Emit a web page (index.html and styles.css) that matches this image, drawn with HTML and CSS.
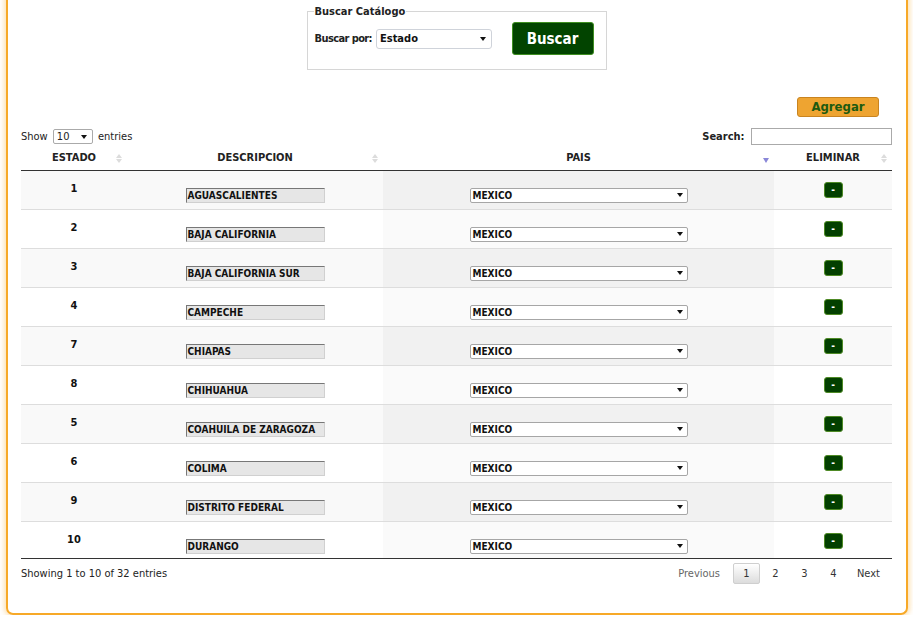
FILE: index.html
```html
<!DOCTYPE html>
<html lang="es">
<head>
<meta charset="utf-8">
<title>Catálogo de Estados</title>
<link rel="stylesheet" href="styles.css">
</head>
<body>
<div class="frame">
  <fieldset class="search-box">
    <legend>Buscar Catálogo</legend>
    <div class="search-row">
      <label class="lbl">Buscar por:</label>
      <span class="sel sel-big">Estado<i class="caret"></i></span>
      <button class="btn-buscar">Buscar</button>
    </div>
  </fieldset>

  <div class="actions"><button class="btn-agregar">Agregar</button></div>

  <div class="dt">
    <div class="dt-top">
      <div class="length">Show <span class="sel sel-len">10<i class="caret"></i></span> entries</div>
      <div class="filter">Search: <span class="search-input"></span></div>
    </div>
    <table class="grid">
      <colgroup><col class="c1"><col class="c2"><col class="c3"><col class="c4"></colgroup>
      <thead>
        <tr>
          <th>ESTADO<span class="sort"></span></th>
          <th>DESCRIPCION<span class="sort"></span></th>
          <th class="sorted">PAIS<span class="sort-desc"></span></th>
          <th>ELIMINAR<span class="sort"></span></th>
        </tr>
      </thead>
      <tbody>
        <tr><td><div class="num">1</div></td><td><span class="desc">AGUASCALIENTES</span></td><td class="s"><span class="sel sel-pais">MEXICO<i class="caret"></i></span></td><td><button class="btn-del">-</button></td></tr>
        <tr><td><div class="num">2</div></td><td><span class="desc">BAJA CALIFORNIA</span></td><td class="s"><span class="sel sel-pais">MEXICO<i class="caret"></i></span></td><td><button class="btn-del">-</button></td></tr>
        <tr><td><div class="num">3</div></td><td><span class="desc">BAJA CALIFORNIA SUR</span></td><td class="s"><span class="sel sel-pais">MEXICO<i class="caret"></i></span></td><td><button class="btn-del">-</button></td></tr>
        <tr><td><div class="num">4</div></td><td><span class="desc">CAMPECHE</span></td><td class="s"><span class="sel sel-pais">MEXICO<i class="caret"></i></span></td><td><button class="btn-del">-</button></td></tr>
        <tr><td><div class="num">7</div></td><td><span class="desc">CHIAPAS</span></td><td class="s"><span class="sel sel-pais">MEXICO<i class="caret"></i></span></td><td><button class="btn-del">-</button></td></tr>
        <tr><td><div class="num">8</div></td><td><span class="desc">CHIHUAHUA</span></td><td class="s"><span class="sel sel-pais">MEXICO<i class="caret"></i></span></td><td><button class="btn-del">-</button></td></tr>
        <tr><td><div class="num">5</div></td><td><span class="desc">COAHUILA DE ZARAGOZA</span></td><td class="s"><span class="sel sel-pais">MEXICO<i class="caret"></i></span></td><td><button class="btn-del">-</button></td></tr>
        <tr><td><div class="num">6</div></td><td><span class="desc">COLIMA</span></td><td class="s"><span class="sel sel-pais">MEXICO<i class="caret"></i></span></td><td><button class="btn-del">-</button></td></tr>
        <tr><td><div class="num">9</div></td><td><span class="desc">DISTRITO FEDERAL</span></td><td class="s"><span class="sel sel-pais">MEXICO<i class="caret"></i></span></td><td><button class="btn-del">-</button></td></tr>
        <tr><td><div class="num">10</div></td><td><span class="desc">DURANGO</span></td><td class="s"><span class="sel sel-pais">MEXICO<i class="caret"></i></span></td><td><button class="btn-del">-</button></td></tr>
      </tbody>
    </table>
    <div class="dt-bottom">
      <div class="info">Showing 1 to 10 of 32 entries</div>
      <div class="pager">
        <span class="pg disabled">Previous</span>
        <span class="pg current">1</span>
        <span class="pg">2</span>
        <span class="pg">3</span>
        <span class="pg">4</span>
        <span class="pg">Next</span>
      </div>
    </div>
  </div>
</div>
</body>
</html>
```

FILE: styles.css
```css
* { box-sizing: border-box; }
html, body { margin: 0; padding: 0; background: #fff; overflow: hidden; }
body {
  font-family: "DejaVu Sans Condensed", "DejaVu Sans", sans-serif;
  font-size: 11px;
  color: #222;
}
.frame {
  margin: -10px 5px 0 6px;
  height: 625px;
  border: 2px solid #f7a928;
  border-top: none;
  border-radius: 0 0 7px 7px;
  box-shadow: 0 0 5px 2px rgba(247, 169, 40, 0.35);
  padding: 15px 14px 0 13px;
}
.search-box {
  width: 300px;
  min-width: 0;
  margin: 0 auto;
  border: 1px solid #d6d6d6;
  padding: 4px 12px 14px 7px;
}
.search-box legend {
  padding: 0 1px;
  margin-left: -1px;
  font-weight: bold;
  font-size: 11px;
  color: #222;
}
.search-row { display: flex; align-items: center; min-width: 0; }
.lbl {
  flex: 0 0 auto;
  white-space: nowrap;
  font-weight: bold; color: #222;
  margin-right: 4px;
  letter-spacing: -0.6px;
}
.sel {
  position: relative;
  display: inline-block;
  background: #fff;
  border: 1px solid #b4b4b4;
  border-radius: 2px;
  font-weight: bold;
  color: #111;
}
.caret {
  position: absolute;
  top: 50%;
  margin-top: -2px;
  width: 0; height: 0;
  border-left: 3px solid transparent;
  border-right: 3px solid transparent;
  border-top: 4px solid #111;
}
.sel-big {
  flex: 0 0 116px;
  width: 116px; height: 20px; line-height: 18px;
  padding-left: 3px;
  border-color: #cfd3da;
  border-radius: 3px;
}
.sel-big .caret { right: 5px; }
.btn-buscar {
  flex: 0 0 82px;
  margin-left: auto;
  width: 82px; height: 33px;
  background: #024400;
  border: 1px solid #3f8f21;
  border-radius: 3px;
  color: #fff;
  font-family: inherit;
  font-weight: bold;
  font-size: 15px;
  padding: 0;
}
.actions { display: flex; justify-content: flex-end; margin-top: 27px; padding-right: 13px; }
.btn-agregar {
  width: 82px; height: 20px;
  background: #eea431;
  border: 1px solid #c98420;
  border-radius: 3px;
  color: #1d5a10;
  font-family: inherit;
  font-weight: bold;
  font-size: 13px;
  padding: 0;
  line-height: 18px;
}
.dt-top {
  display: flex; justify-content: space-between; align-items: center;
  margin-top: 11px; height: 17px;
  color: #222;
}
.sel-len {
  width: 40px; height: 15px; line-height: 13px;
  padding-left: 3px; font-weight: normal; color: #222;
  margin: 0 2px;
  border-color: #aaa;
}
.sel-len .caret { right: 5px; }
.search-input {
  display: inline-block; vertical-align: middle;
  width: 141px; height: 17px;
  border: 1px solid #aaa; margin-left: 3px;
}
.filter { font-weight: bold; }
.length { font-weight: normal; }
.grid {
  width: 871px;
  border-collapse: collapse;
  margin-top: 3px;
}
.c1 { width: 106px; } .c2 { width: 256px; } .c3 { width: 391px; } .c4 { width: 118px; }
.grid th {
  position: relative;
  height: 22px;
  padding: 0 0 2px;
  font-weight: bold;
  font-size: 11px;
  text-align: center;
  color: #222;
  border-bottom: 1px solid #333;
}
.sort, .sort-desc {
  position: absolute; right: 4px; top: 5px;
  width: 7px; height: 12px;
}
.sort::before, .sort::after {
  content: ""; position: absolute; left: 0;
  border-left: 3px solid transparent; border-right: 3px solid transparent;
}
.sort::before { top: 1px; border-bottom: 4px solid #dcdcdc; }
.sort::after { top: 6px; border-top: 4px solid #dcdcdc; }
.sort-desc::after {
  content: ""; position: absolute; left: 0; top: 5px;
  border-left: 3px solid transparent; border-right: 3px solid transparent;
  border-top: 5px solid #8a87d8;
}
.grid tbody tr { height: 39px; border-bottom: 1px solid #ddd; }
.grid tbody tr:nth-child(odd) { background: #f9f9f9; }
.grid tbody tr:nth-child(odd) td.s { background: #f1f1f1; }
.grid tbody tr:nth-child(even) td.s { background: #fafafa; }
.grid tbody tr:last-child { height: 37px; border-bottom: 1px solid #333; }
.grid td { padding: 0; vertical-align: top; text-align: center; }
.num { margin-top: 11px; line-height: 14px; font-weight: bold; color: #111; }
.desc {
  display: inline-block; text-align: left;
  margin-top: 17px;
  width: 139px; height: 15px; line-height: 13px;
  background: #e6e6e6;
  border-style: solid; border-width: 1px;
  border-color: #777 #d0d0d0 #d0d0d0 #777;
  padding-left: 1px;
  font-weight: bold; font-size: 10px; color: #111;
}
.sel-pais {
  text-align: left;
  margin-top: 17px;
  width: 218px; height: 15px; line-height: 13px;
  padding-left: 2px;
  font-size: 10px;
  border-color: #a6a6a6;
}
.sel-pais .caret { right: 4px; }
.btn-del {
  margin-top: 11px;
  width: 19px; height: 16px;
  padding: 0;
  background: #034000;
  border: 1px solid #4e8a25;
  border-radius: 3px;
  color: #fff;
  font-family: inherit;
  font-weight: bold;
  font-size: 10px;
  line-height: 12px;
}
.dt-bottom {
  display: flex; justify-content: space-between; align-items: center;
  margin-top: 4px;
  color: #222;
}
.info { padding-top: 1px; }
.pager { display: flex; align-items: center; margin-right: 4px; }
.pg {
  display: inline-block;
  height: 21px; line-height: 19px;
  padding: 0 7px;
  min-width: 27px;
  text-align: center;
  border: 1px solid transparent;
  color: #333;
  margin-left: 2px;
}
.pg.disabled { color: #666; margin-right: 3px; }
.pg.current {
  border: 1px solid #cfcfcf;
  border-radius: 2px;
  background: linear-gradient(#fff, #dcdcdc);
}
```
